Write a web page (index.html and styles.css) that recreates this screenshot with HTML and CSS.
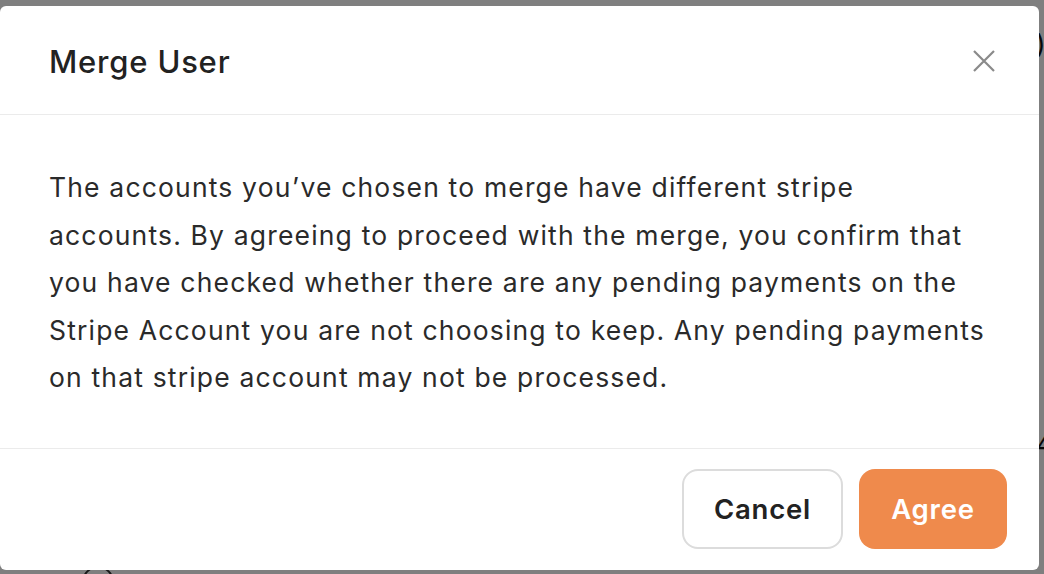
FILE: index.html
```html
<!DOCTYPE html>
<html>
<head>
    <meta charset="UTF-8">
    <title>Merge User</title>
    <link rel="stylesheet" href="styles.css">
</head>
<body>
    <!-- Page behind the dialog (mostly hidden) -->
    <div class="page">
        <span class="page-bit bit-top">)</span>
        <span class="page-bit bit-mid">4</span>
        <span class="page-ring"></span>
    </div>
    <div class="backdrop"></div>

    <!-- Merge dialog -->
    <div class="modal">
        <div class="modal-header">
            <h2 class="modal-title">Merge User</h2>
            <button class="close-btn" aria-label="Close">
                <svg width="24" height="24" viewBox="0 0 24 24">
                    <path d="M2 2 L22 22 M22 2 L2 22" stroke="#8a8a8a" stroke-width="2.2" fill="none"/>
                </svg>
            </button>
        </div>
        <div class="modal-body">
            <p>The accounts you’ve chosen to merge have different stripe<br>
            accounts. By agreeing to proceed with the merge, you confirm that<br>
            you have checked whether there are any pending payments on the<br>
            Stripe Account you are not choosing to keep. Any pending payments<br>
            on that stripe account may not be processed.</p>
        </div>
        <div class="modal-footer">
            <button class="btn btn-cancel">Cancel</button>
            <button class="btn btn-agree">Agree</button>
        </div>
    </div>
</body>
</html>
```

FILE: styles.css
```css
html, body {
    margin: 0;
    height: 100%;
    overflow: hidden;
}
body {
    font-family: Inter, "Noto Sans", sans-serif;
    background-color: #fff;
    padding-top: 6px;
    box-sizing: border-box;
    position: relative;
}
.page {
    position: absolute;
    inset: 0;
}
.page-bit {
    position: absolute;
    font-size: 26px;
    color: #111;
}
.bit-top {
    left: 1036px;
    top: 28px;
}
.bit-mid {
    left: 1036px;
    top: 428px;
}
.page-ring {
    position: absolute;
    left: 82px;
    top: 566px;
    width: 28px;
    height: 28px;
    border: 2px solid #333;
    border-radius: 50%;
}
.backdrop {
    position: absolute;
    inset: 0;
    background-color: rgba(0, 0, 0, 0.5);
}
.modal {
    position: relative;
    width: 1039px;
    height: 564px;
    background-color: #fff;
    border-radius: 6px;
    display: flex;
    flex-direction: column;
}
.modal-header {
    height: 109px;
    padding: 2px 32px 0 49px;
    box-sizing: border-box;
    display: flex;
    align-items: center;
    justify-content: space-between;
    border-bottom: 1px solid #ebebeb;
}
.modal-title {
    margin: 0;
    font-size: 31px;
    font-weight: 500;
    color: #222;
    letter-spacing: 0.8px;
}
.close-btn {
    background: none;
    border: none;
    padding: 0;
    margin-right: 11px;
    cursor: pointer;
    display: flex;
}
.modal-body {
    flex: 1;
    padding: 49px 40px 0 49px;
}
.modal-body p {
    margin: 0;
    font-size: 26.5px;
    line-height: 47.5px;
    letter-spacing: 1.17px;
    color: #2a2a2a;
    white-space: nowrap;
}
.modal-footer {
    border-top: 1px solid #ebebeb;
    padding: 20px 32px 21px;
    display: flex;
    justify-content: flex-end;
    gap: 16px;
}
.btn {
    height: 80px;
    padding: 0;
    font-family: Inter, "Noto Sans", sans-serif;
    font-size: 27.5px;
    font-weight: 600;
    letter-spacing: 0.8px;
    border-radius: 16px;
    cursor: pointer;
}
.btn-cancel {
    width: 161px;
    background-color: #fff;
    color: #222;
    border: 2px solid #dcdcdc;
}
.btn-agree {
    width: 148px;
    background-color: #ef8a4c;
    color: #fff;
    border: none;
}
.btn-agree:hover {
    background-color: #e57a38;
}
```
